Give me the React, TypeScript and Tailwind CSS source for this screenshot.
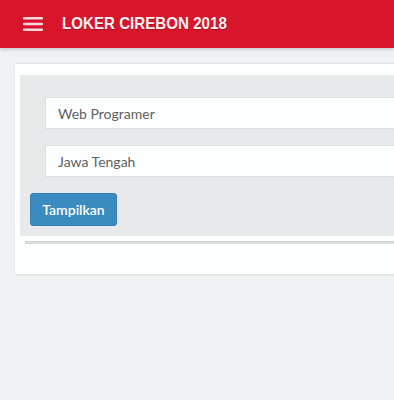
import React from 'react';

const App: React.FC = () => {
  return (
    <div className="w-[394px] h-[400px] overflow-hidden bg-[#eef2f2] font-['Lato',sans-serif]">
      {/* Top bar */}
      <header className="h-[48px] bg-[#d7152b] flex items-center shadow-[0_2px_3px_rgba(0,0,0,0.15)]">
        <div className="w-[62px] flex justify-center pl-1">
          <svg width="20" height="16" viewBox="0 0 20 16" fill="none">
            <rect x="0" y="1" width="20" height="2.4" rx="1" fill="#f6d8dc" />
            <rect x="0" y="6.8" width="20" height="2.4" rx="1" fill="#f6d8dc" />
            <rect x="0" y="12.6" width="20" height="2.4" rx="1" fill="#f6d8dc" />
          </svg>
        </div>
        <h1 className="text-[#fbeff1] text-[17px] font-bold font-['Liberation_Sans',sans-serif] scale-x-[0.89] origin-left [text-shadow:0_1px_0_rgba(90,0,10,0.35)]">
          LOKER CIREBON 2018
        </h1>
      </header>

      {/* Card */}
      <div className="pt-[15px] pl-[15px]">
        <div className="w-[420px] bg-[#fcfffe] border-t border-[#dfe3e3] shadow-[0_1px_2px_rgba(0,0,0,0.08)] pt-[11px] pl-[5px] pb-[30px]">
          <div className="bg-[#e8e9ea] pt-[22px] pb-[10px] pl-[10px]">
            <div className="pl-[15px] flex flex-col gap-[16px]">
              <div className="h-[32px] bg-[#fcfffe] border border-[#dcdfe0] flex items-center pl-[12px] text-[14px] text-[#5f5f5f]">
                Web Programer
              </div>
              <div className="h-[32px] bg-[#fcfffe] border border-[#dcdfe0] flex items-center pl-[12px] text-[14px] text-[#5f5f5f]">
                Jawa Tengah
              </div>
            </div>
            <button className="mt-[16px] w-[87px] h-[33px] rounded-[3px] bg-[#3a8cc0] border border-[#3481b3] text-white text-[14px] font-semibold">
              Tampilkan
            </button>
          </div>
          <div className="mt-[5px] ml-[5px] h-[3px] bg-[#d9dcdd] border-t border-[#cfd2d3]" />
        </div>
      </div>
    </div>
  );
};

export default App;
